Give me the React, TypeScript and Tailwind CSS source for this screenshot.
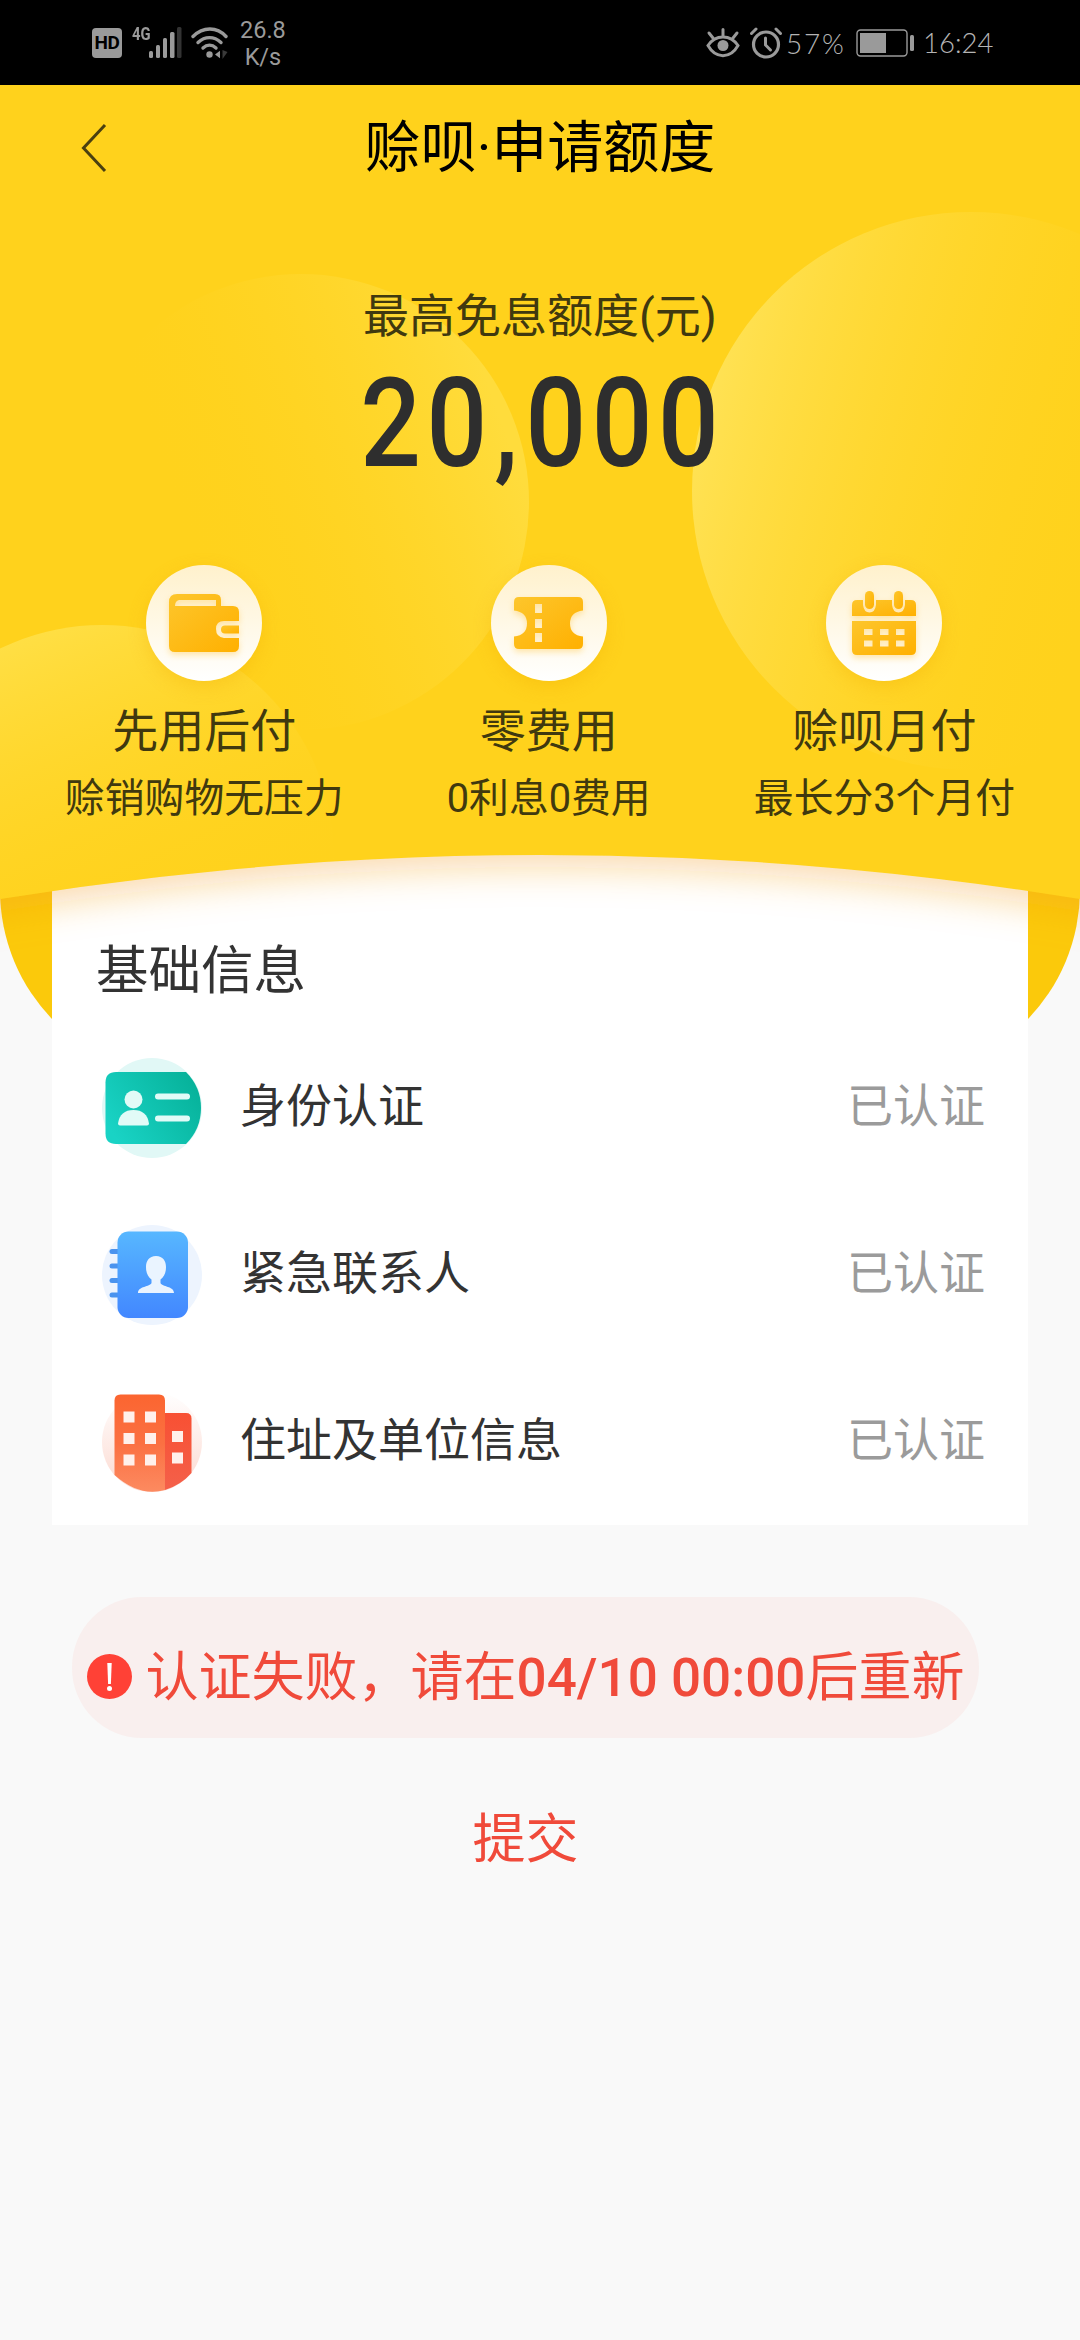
import type { ReactNode } from 'react';

/* ---------- Status bar ---------- */
function StatusBar() {
  return (
    <div className="flex h-[85px] items-center bg-black pl-[92px] pr-[87px] text-[#9a9a9a]">
      {/* HD + signal */}
      <div className="flex h-[30px] w-[30px] items-center justify-center rounded-[4px] bg-[#9a9a9a] font-['Roboto',sans-serif] text-[19px] leading-none font-bold tracking-[-0.5px] text-black">
        HD
      </div>
      <div className="ml-[10px] h-[34px] w-[18px] origin-left scale-x-[0.78] font-['Roboto',sans-serif] text-[19px] leading-[16px] font-bold">
        4G
      </div>
      <svg className="-mt-px -ml-[2px] shrink-0" width="34" height="32" viewBox="0 0 34 32" fill="#9a9a9a">
        <rect x="1" y="25" width="4" height="7" rx="1.5" />
        <rect x="8" y="19" width="4" height="13" rx="1.5" />
        <rect x="15" y="12" width="4" height="20" rx="1.5" />
        <rect x="22" y="6" width="4.5" height="26" rx="1.5" />
        <rect x="29" y="1" width="4.5" height="31" rx="1.5" fill="#333" />
      </svg>
      <svg className="ml-[9px] shrink-0" width="40" height="34" viewBox="0 0 40 34" fill="none" stroke="#9a9a9a" strokeWidth="3.4" strokeLinecap="round">
        <path d="M2 10.5C12 .5 26 .5 35 10.5" />
        <path d="M7 16.5c7-6.500 16-6.500 23 0" />
        <path d="M12 22c4-3.600 9-3.600 13 0" />
        <circle cx="18.500" cy="28.500" r="3.200" fill="#9a9a9a" stroke="none" />
        <path d="M24 28.500l5-3.800v7.600z" fill="#9a9a9a" stroke="none" />
        <path d="M36.500 26l-5 7v-9z" fill="#3a3a3a" stroke="none" />
      </svg>
      <div className="mt-[2px] ml-[9px] text-center font-['Roboto',sans-serif] text-[23.5px] leading-[27px]">
        <div>26.8</div>
        <div>K/s</div>
      </div>

      <div className="ml-auto flex items-center">
        <svg width="34" height="32" viewBox="0 0 34 32" fill="none" stroke="#9a9a9a" strokeWidth="3" strokeLinecap="round">
          <path d="M2 18.500C9.500 7 24.500 7 32 18.500C24.500 32 9.500 32 2 18.500z" />
          <circle cx="17" cy="18.500" r="5.500" fill="#9a9a9a" stroke="none" />
          <path d="M17 2.500v6M3 6l4 5M31 6l-4 5" />
        </svg>
        <svg className="ml-[10px]" width="32" height="32" viewBox="0 0 32 32" fill="none" stroke="#9a9a9a" strokeLinecap="round">
          <circle cx="16" cy="17.500" r="12.500" strokeWidth="3.200" />
          <path d="M15.500 11v7l5 5" strokeWidth="3" />
          <path d="M1.500 6.500l4.500-4.500M30.500 6.500l-4.500-4.500" strokeWidth="3" />
        </svg>
        <span className="ml-[4px] w-[62px] font-['Lato',sans-serif] text-[28px] leading-none font-light tracking-[1.8px] text-[#b4b4b4]">57%</span>
        <svg className="ml-[8px]" width="60" height="28" viewBox="0 0 60 28" fill="none" stroke="#9a9a9a">
          <rect x="1" y="1" width="50" height="26" rx="3.500" strokeWidth="1.400" />
          <rect x="4" y="4" width="26" height="20" fill="#9a9a9a" stroke="none" />
          <rect x="54" y="6" width="4" height="16" rx="1.500" fill="#9a9a9a" stroke="none" />
        </svg>
        <span className="ml-[7px] w-[70px] text-right font-['Lato',sans-serif] text-[27.500px] leading-none font-light text-[#b4b4b4]">16:24</span>
      </div>
    </div>
  );
}

/* ---------- Hero background ---------- */
function HeroBackground() {
  return (
    <svg className="absolute top-0 left-0 -z-10" width="1080" height="1000" viewBox="0 85 1080 1000">
      <defs>
        <clipPath id="hero">
          <path d="M0 85H1080V899Q810 855 540 855Q270 855 0 899z" />
        </clipPath>
        <linearGradient id="c1" x1="0.95" y1="0.35" x2="0.25" y2="0.6">
          <stop offset="0" stopColor="#ffdc3c" />
          <stop offset="1" stopColor="#ffd21e" stopOpacity="0" />
        </linearGradient>
        <linearGradient id="c2" x1="0" y1="0.4" x2="0.75" y2="0.6">
          <stop offset="0" stopColor="#ffe255" />
          <stop offset="1" stopColor="#ffd21e" stopOpacity="0" />
        </linearGradient>
        <linearGradient id="c3" x1="0.3" y1="0" x2="0.6" y2="0.7">
          <stop offset="0" stopColor="#ffe048" />
          <stop offset="1" stopColor="#ffd21e" stopOpacity="0" />
        </linearGradient>
        <filter id="shade" x="-10%" y="-10%" width="120%" height="120%">
          <feDropShadow dx="0" dy="12" stdDeviation="18" floodColor="#f39a1c" floodOpacity="0.36" />
        </filter>
      </defs>
      <path filter="url(#shade)" d="M-60 85H1140V910L1080 899Q810 855 540 855Q270 855 0 899L-60 910z" fill="#ffd21e" />
      <g clipPath="url(#hero)">
        <circle cx="301" cy="502" r="228" fill="url(#c1)" />
        <circle cx="971" cy="491" r="279" fill="url(#c2)" />
        <circle cx="102" cy="857" r="232" fill="url(#c3)" />
      </g>
    </svg>
  );
}

/* ---------- Feature icons ---------- */
function FeatureIcon({ children }: { children: ReactNode }) {
  return (
    <div className="flex h-[116px] w-[116px] items-center justify-center rounded-full bg-linear-to-b from-[#fff1cc] to-white shadow-[0_6px_18px_rgba(240,170,0,0.3)]">
      <svg className="drop-shadow-[0_3px_3px_rgba(255,180,0,0.3)]" width="116" height="116" viewBox="0 0 116 116" fill="url(#amber)">
        <defs>
          <linearGradient id="amber" x1="0" y1="0" x2="1" y2="1">
            <stop offset="0" stopColor="#fdc62c" />
            <stop offset="1" stopColor="#ffb000" />
          </linearGradient>
        </defs>
        {children}
      </svg>
    </div>
  );
}

function WalletIcon() {
  return (
    <FeatureIcon>
      <path d="M31 29H69Q75 29 75 35V41H87Q93 41 93 47V56H78Q70 56 70 64T78 73H93V81Q93 87 87 87H29Q23 87 23 81V37Q23 29 31 29zM33 35Q29 36 29 41H70V35z" fillRule="evenodd" />
      <path d="M79 60.500H93V68.500H79Q75 68.500 75 64.500T79 60.500z" />
    </FeatureIcon>
  );
}

function TicketIcon() {
  return (
    <FeatureIcon>
      <path d="M28 32H87Q92 32 92 37V45.500Q79 47 79 58.500T92 71.500V79Q92 84 87 84H28Q23 84 23 79V71.500Q36 70 36 58.500T23 45.500V37Q23 32 28 32zM44 39v9h7v-9zM44 54v9h7v-9zM44 68v9h7v-9z" fillRule="evenodd" />
    </FeatureIcon>
  );
}

function CalendarIcon() {
  return (
    <FeatureIcon>
      <path d="M31 35H37V40Q38 47.500 43.500 47.500T50 40V35H66V40Q67 47.500 72.500 47.500T79 40V35H85Q90 35 90 40V51H26V40Q26 35 31 35z" />
      <rect x="39" y="26" width="9" height="18" rx="4.500" />
      <rect x="68" y="26" width="9" height="18" rx="4.500" />
      <path d="M26 56H90V85Q90 90 85 90H31Q26 90 26 85zM38 64v6h8.500v-6zM54 64v6h8.500v-6zM70 64v6h8.500v-6zM38 75.500v6h8.500v-6zM54 75.500v6h8.500v-6zM70 75.500v6h8.500v-6z" fillRule="evenodd" />
    </FeatureIcon>
  );
}

/* ---------- Row icons ---------- */
function IdCardIcon() {
  return (
    <svg width="102" height="102" viewBox="-1 -1 102 102">
      <defs>
        <linearGradient id="teal" x1="0" y1="0.7" x2="1" y2="0.2">
          <stop offset="0" stopColor="#19d3c5" />
          <stop offset="1" stopColor="#06b199" />
        </linearGradient>
      </defs>
      <circle cx="50" cy="50" r="50" fill="#e1f8f6" />
      <path d="M14 14H84Q99 29 99 50T84 86H14Q3.500 86 3.500 75.500V24.500Q3.500 14 14 14z" fill="url(#teal)" />
      <g fill="#e1fbf7">
        <circle cx="31.500" cy="41.500" r="9" />
        <path d="M16 65.500Q18 52 31.500 52T47 65.500Q47 67.500 45 67.500H18Q16 67.500 16 65.500z" />
        <rect x="53" y="35.500" width="35" height="6" rx="3" />
        <rect x="53" y="57.500" width="35" height="6" rx="3" />
      </g>
    </svg>
  );
}

function ContactIcon() {
  return (
    <svg width="102" height="102" viewBox="-1 -1 102 102">
      <defs>
        <linearGradient id="blue" x1="0" y1="0" x2="0" y2="1">
          <stop offset="0" stopColor="#57b7ff" />
          <stop offset="1" stopColor="#4287ff" />
        </linearGradient>
      </defs>
      <circle cx="50" cy="50" r="50" fill="#edf4fe" />
      <g fill="#4a93ee">
        <rect x="7.500" y="24" width="14" height="5" rx="2.500" />
        <rect x="7.500" y="38.500" width="14" height="5" rx="2.500" />
        <rect x="7.500" y="53" width="14" height="5" rx="2.500" />
        <rect x="7.500" y="67.500" width="14" height="5" rx="2.500" />
      </g>
      <rect x="15.500" y="6.500" width="70.500" height="86.500" rx="11" fill="url(#blue)" />
      <path d="M54 31C61 31 64 36 64 42C64 48 62 52 58.500 54.500V58C60 62 72 61 72 68H36C36 61 48 62 49.500 58V54.500C46 52 44 48 44 42C44 36 47 31 54 31z" fill="#eaf4ff" />
    </svg>
  );
}

function BuildingIcon() {
  return (
    <svg width="102" height="102" viewBox="-1 -1 102 102">
      <defs>
        <linearGradient id="orange" x1="0" y1="0" x2="0" y2="1">
          <stop offset="0" stopColor="#fb6530" />
          <stop offset="0.5" stopColor="#fb7042" />
          <stop offset="1" stopColor="#fc8a60" />
        </linearGradient>
        <linearGradient id="pink" x1="0" y1="0" x2="0" y2="1">
          <stop offset="0" stopColor="#fff" />
          <stop offset="1" stopColor="#fcd9d0" />
        </linearGradient>
        <linearGradient id="red" x1="0" y1="0" x2="0" y2="1">
          <stop offset="0" stopColor="#f85033" />
          <stop offset="1" stopColor="#f4604a" />
        </linearGradient>
      </defs>
      <circle cx="50" cy="50" r="50" fill="url(#pink)" />
      <path d="M18.500 2.500H57Q63 2.500 63 8.500V98Q37 105 12.500 83V8.500Q12.500 2.500 18.500 2.500z" fill="url(#orange)" />
      <path d="M63 21H84Q89.500 21 89.500 26.500V81Q79 93 63 98z" fill="url(#red)" />
      <g fill="#fff0eb">
        <path d="M21.500 19.500h11v11h-11zM43 19.500h11v11h-11zM21.500 41h11v11h-11zM43 41h11v11h-11zM21.500 62.500h11v11h-11zM43 62.500h11v11h-11z" />
        <path d="M70 39h11v11h-11zM70 60.500h11v11h-11z" />
      </g>
    </svg>
  );
}

const features = [
  { icon: <WalletIcon />, title: '先用后付', desc: '赊销购物无压力' },
  { icon: <TicketIcon />, title: '零费用', desc: '0利息0费用' },
  { icon: <CalendarIcon />, title: '赊呗月付', desc: '最长分3个月付' },
];

const rows = [
  { icon: <IdCardIcon />, label: '身份认证', status: '已认证' },
  { icon: <ContactIcon />, label: '紧急联系人', status: '已认证' },
  { icon: <BuildingIcon />, label: '住址及单位信息', status: '已认证' },
];

export default function App() {
  return (
    <div
      lang="zh-CN"
      className="h-[2340px] w-[1080px] overflow-hidden bg-[#f9f9f9] font-['Roboto','Noto_Sans_CJK_SC',sans-serif] text-[#333]"
    >
      <StatusBar />

      <section className="relative isolate z-10 h-[770px]">
        <HeroBackground />

        <header className="grid h-[126px] grid-cols-[1fr_auto_1fr] items-center pl-[80px]">
          <button aria-label="返回">
            <svg width="28" height="50" viewBox="0 0 28 50" fill="none" stroke="#4a4010" strokeWidth="3">
              <path d="M25 2L3.500 25L25 48" />
            </svg>
          </button>
          <h1 className="-ml-[80px] text-[56px] leading-[80px] text-black">赊呗·申请额度</h1>
        </header>

        <div className="flex flex-col items-center pt-[72px]">
          <p className="text-[46px] leading-[66px] text-[#40390f]">最高免息额度(元)</p>
          <p className="mt-[10px] flex scale-x-[0.86] pl-[6px] text-[124px] leading-[130px] font-medium tracking-[6.5px] text-[#2e2e2e]">
            20<span className="px-[2px]">,</span>000
          </p>
        </div>

        <div className="mt-[76px] flex justify-between pr-[65px] pl-[65px]">
          {features.map(({ icon, title, desc }) => (
            <div key={title} className="flex flex-col items-center text-[#40390f]">
              {icon}
              <h2 className="mt-[17px] text-[46px] leading-[66px]">{title}</h2>
              <p className="mt-[5px] text-[39.800px] leading-[60px]">{desc}</p>
            </div>
          ))}
        </div>
      </section>

      {/* Rounded base under the hero, the card sits on it */}
      <div className="-mt-[15px] h-[236px] rounded-b-[186px] bg-[#fbc90b] px-[52px]">
        <main className="h-[685px] bg-white pt-[91px] pr-[43px] pl-[44px]">
          <h2 className="text-[52.500px] leading-[80px]">基础信息</h2>
          <ul className="mt-[12px]">
            {rows.map(({ icon, label, status }) => (
              <li key={label} className="flex h-[167px] items-center">
                <div className="ml-[5px] w-[102px] pt-[2px]">{icon}</div>
                <span className="ml-[37px] text-[46px]">{label}</span>
                <span className="ml-auto text-[46px] text-[#9b9b9b]">{status}</span>
              </li>
            ))}
          </ul>
        </main>
      </div>

      {/* Failure notice */}
      <div className="mt-[521px] ml-[72px] h-[141px] w-[907px] rounded-[70px] bg-[#f9efee] text-center text-[53px] leading-[162px] whitespace-nowrap text-[#f04a3a]">
        <svg className="mr-[14px] inline-block align-[-3px]" width="45" height="45" viewBox="0 0 45 45">
          <circle cx="22.500" cy="22.500" r="22.500" fill="#ff4136" />
          <path d="M20.300 9h4.400l-.8 21h-2.800z" fill="#fff" />
          <circle cx="22.500" cy="34.500" r="2.500" fill="#fff" />
        </svg>
        认证失败，请在<b className="font-medium">04/10 00:00</b>后重新
        <br />
        提交
      </div>
    </div>
  );
}
